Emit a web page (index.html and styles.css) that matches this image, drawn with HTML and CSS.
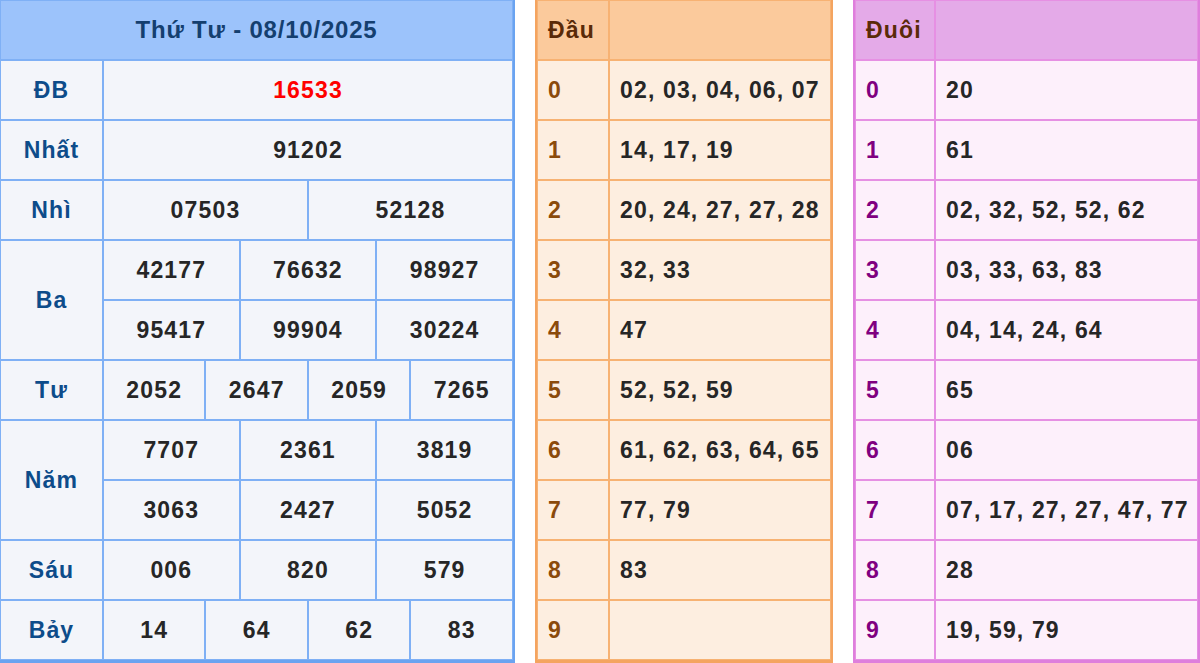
FILE: index.html
```html
<!DOCTYPE html>
<html lang="vi">
<head>
<meta charset="utf-8">
<title>Kết quả xổ số - Thứ Tư 08/10/2025</title>
<link rel="stylesheet" href="styles.css">
</head>
<body>
<div class="board">
  <table class="tbl tbl-result">
    <colgroup>
      <col class="col-label">
      <col><col><col><col><col><col><col><col><col><col><col><col>
    </colgroup>
    <tr><th class="title" colspan="13">Thứ Tư - 08/10/2025</th></tr>
    <tr><td class="label">ĐB</td><td class="num special" colspan="12">16533</td></tr>
    <tr><td class="label">Nhất</td><td class="num" colspan="12">91202</td></tr>
    <tr><td class="label">Nhì</td><td class="num" colspan="6">07503</td><td class="num" colspan="6">52128</td></tr>
    <tr><td class="label" rowspan="2">Ba</td><td class="num" colspan="4">42177</td><td class="num" colspan="4">76632</td><td class="num" colspan="4">98927</td></tr>
    <tr><td class="num" colspan="4">95417</td><td class="num" colspan="4">99904</td><td class="num" colspan="4">30224</td></tr>
    <tr><td class="label">Tư</td><td class="num" colspan="3">2052</td><td class="num" colspan="3">2647</td><td class="num" colspan="3">2059</td><td class="num" colspan="3">7265</td></tr>
    <tr><td class="label" rowspan="2">Năm</td><td class="num" colspan="4">7707</td><td class="num" colspan="4">2361</td><td class="num" colspan="4">3819</td></tr>
    <tr><td class="num" colspan="4">3063</td><td class="num" colspan="4">2427</td><td class="num" colspan="4">5052</td></tr>
    <tr><td class="label">Sáu</td><td class="num" colspan="4">006</td><td class="num" colspan="4">820</td><td class="num" colspan="4">579</td></tr>
    <tr><td class="label">Bảy</td><td class="num" colspan="3">14</td><td class="num" colspan="3">64</td><td class="num" colspan="3">62</td><td class="num" colspan="3">83</td></tr>
  </table>

  <table class="tbl tbl-head">
    <colgroup><col class="col-digit"><col></colgroup>
    <tr><th class="hd">Đầu</th><th class="hd"></th></tr>
    <tr><td class="digit">0</td><td class="list">02, 03, 04, 06, 07</td></tr>
    <tr><td class="digit">1</td><td class="list">14, 17, 19</td></tr>
    <tr><td class="digit">2</td><td class="list">20, 24, 27, 27, 28</td></tr>
    <tr><td class="digit">3</td><td class="list">32, 33</td></tr>
    <tr><td class="digit">4</td><td class="list">47</td></tr>
    <tr><td class="digit">5</td><td class="list">52, 52, 59</td></tr>
    <tr><td class="digit">6</td><td class="list">61, 62, 63, 64, 65</td></tr>
    <tr><td class="digit">7</td><td class="list">77, 79</td></tr>
    <tr><td class="digit">8</td><td class="list">83</td></tr>
    <tr><td class="digit">9</td><td class="list"></td></tr>
  </table>

  <table class="tbl tbl-tail">
    <colgroup><col class="col-digit"><col></colgroup>
    <tr><th class="hd">Đuôi</th><th class="hd"></th></tr>
    <tr><td class="digit">0</td><td class="list">20</td></tr>
    <tr><td class="digit">1</td><td class="list">61</td></tr>
    <tr><td class="digit">2</td><td class="list">02, 32, 52, 52, 62</td></tr>
    <tr><td class="digit">3</td><td class="list">03, 33, 63, 83</td></tr>
    <tr><td class="digit">4</td><td class="list">04, 14, 24, 64</td></tr>
    <tr><td class="digit">5</td><td class="list">65</td></tr>
    <tr><td class="digit">6</td><td class="list">06</td></tr>
    <tr><td class="digit">7</td><td class="list">07, 17, 27, 27, 47, 77</td></tr>
    <tr><td class="digit">8</td><td class="list">28</td></tr>
    <tr><td class="digit">9</td><td class="list">19, 59, 79</td></tr>
  </table>
</div>
</body>
</html>
```

FILE: styles.css
```css
html, body {
  margin: 0;
  padding: 0;
  background: #ffffff;
  overflow: hidden;
}

body {
  font-family: "Liberation Sans", Arial, Helvetica, sans-serif;
  font-weight: bold;
  font-size: 23px;
  letter-spacing: 1.15px;
  color: #262626;
}

.board {
  display: flex;
  gap: 20px;
  align-items: flex-start;
  margin: -2px 0 0 -2px;
}

.tbl {
  border-collapse: separate;
  border-spacing: 0;
  table-layout: fixed;
  border-width: 2px 2px 3px 2px;
  border-style: solid;
  flex: none;
}

.tbl tr {
  height: 60px;
}

.tbl th,
.tbl td {
  padding: 0;
  border: 1px solid;
  vertical-align: middle;
  white-space: nowrap;
  font-weight: bold;
}

/* ---------- result table (blue) ---------- */
.tbl-result {
  width: 517px;
  border-color: #6aa3f0;
}

.tbl-result .col-label {
  width: 103px;
}

.tbl-result th,
.tbl-result td {
  border-color: #7fb0f5;
  background: #f3f5fa;
  text-align: center;
}

.tbl-result .title {
  background: #9cc3fb;
  color: #143f6f;
  font-size: 24px;
  letter-spacing: 0.8px;
}

.tbl-result .label {
  color: #0d4c8a;
}

.tbl-result .num {
  color: #262626;
}

.tbl-result .special {
  color: #ff0000;
}

/* ---------- head / tail tables ---------- */
.tbl .hd,
.tbl .digit,
.tbl .list {
  text-align: left;
  padding-left: 10px;
}

.tbl-head {
  width: 298px;
  border-color: #f4a460;
}

.tbl-head .col-digit {
  width: 72px;
}

.tbl-head th,
.tbl-head td {
  border-color: #f7b273;
  background: #fdeee0;
}

.tbl-head .hd {
  background: #fbca9c;
  color: #5a2a08;
}

.tbl-head .digit {
  color: #8b4a0b;
}

.tbl-tail {
  width: 347px;
  border-color: #de7fdc;
}

.tbl-tail .col-digit {
  width: 80px;
}

.tbl-tail th,
.tbl-tail td {
  border-color: #e690e3;
  background: #fdf0fb;
}

.tbl-tail .hd {
  background: #e4aae8;
  color: #5a2a08;
}

.tbl-tail .digit {
  color: #800080;
}
```
